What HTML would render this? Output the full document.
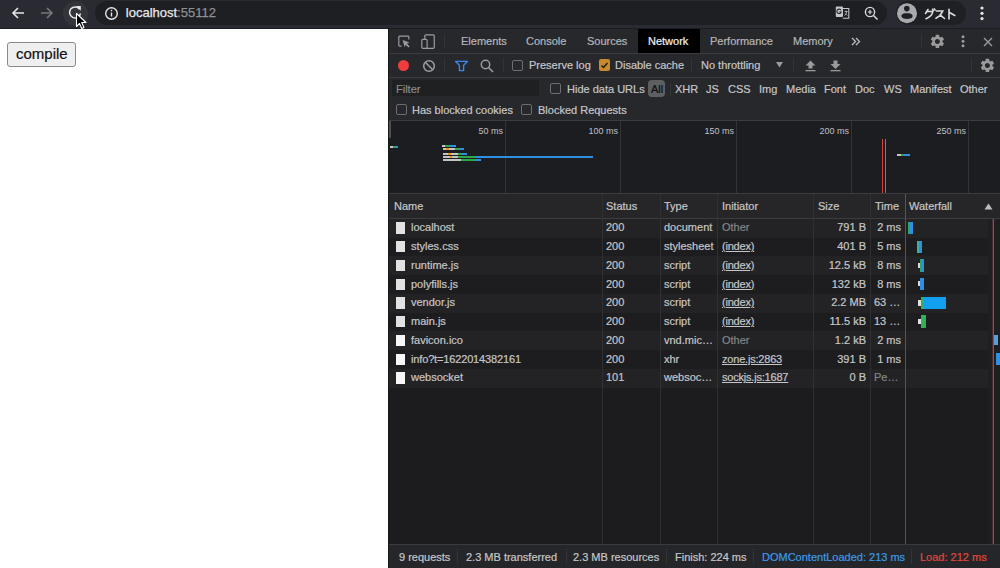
<!DOCTYPE html>
<html><head><meta charset="utf-8">
<style>
*{margin:0;padding:0;box-sizing:border-box}
html,body{width:1000px;height:568px;overflow:hidden}
body{position:relative;background:#fff;font-family:"Liberation Sans",sans-serif}
.a{position:absolute}
.t{position:absolute;font-size:11px;line-height:13px;white-space:nowrap;color:#c6c6c8;-webkit-text-stroke:0.2px currentColor}
.g{color:#858585}
.u{text-decoration:underline;letter-spacing:-0.2px}
.vs{position:absolute;width:1px;background:#3a3a3c}
.hs{position:absolute;height:1px;background:#3c3c3e}
.cb{position:absolute;width:11px;height:11px;border:1px solid #6e6e70;border-radius:2px}
</style></head>
<body>
<!-- chrome toolbar -->
<div class="a" style="left:0;top:0;width:1000px;height:28px;background:#2a2b32"></div>
<div class="a" style="left:0;top:28px;width:1000px;height:1px;background:#1c1d22"></div>
<!-- back -->
<svg class="a" style="left:10px;top:6px" width="16" height="14" viewBox="0 0 16 14"><path d="M14 7H3M8 2L3 7l5 5" stroke="#e6e6e8" stroke-width="1.6" fill="none"/></svg>
<svg class="a" style="left:39px;top:6px" width="16" height="14" viewBox="0 0 16 14"><path d="M2 7h11M8 2l5 5-5 5" stroke="#77787c" stroke-width="1.6" fill="none"/></svg>
<div class="a" style="left:63px;top:1px;width:25px;height:25px;border-radius:50%;background:#34353b"></div>
<svg class="a" style="left:66.8px;top:3.9px" width="16" height="16" viewBox="0 0 16 16"><path d="M12.6 5.2A5.5 5.5 0 1 0 13.5 9.5" stroke="#e6e6e8" stroke-width="1.5" fill="none"/><path d="M9 2h4.8v4.8z" fill="#e6e6e8"/></svg>
<svg class="a" style="left:75px;top:12px" width="12" height="18" viewBox="0 0 12 18"><path d="M1.5 1.5v13l3-3 2.2 5 2.2-1-2.2-5h4.3z" fill="#000" stroke="#fff" stroke-width="1.1" stroke-linejoin="round"/></svg>
<!-- address bar -->
<div class="a" style="left:95px;top:1px;width:792px;height:24px;border-radius:12px;background:#1e1f23"></div>
<svg class="a" style="left:104px;top:5.5px" width="15" height="15" viewBox="0 0 15 15"><circle cx="7.5" cy="7.5" r="5.8" stroke="#e6e6e8" stroke-width="1.4" fill="none"/><path d="M7.5 6.5v4" stroke="#e6e6e8" stroke-width="1.4"/><circle cx="7.5" cy="4.6" r="0.8" fill="#e6e6e8"/></svg>
<div class="a" style="left:125.8px;top:5.2px;font-size:13px;line-height:16px;color:#e8e8ea;white-space:nowrap;-webkit-text-stroke:0.25px currentColor">localhost<span style="color:#8e8f94">:55112</span></div>
<!-- translate icon -->
<svg class="a" style="left:835px;top:6px" width="15" height="14" viewBox="0 0 15 14"><path d="M7.5 2.5h6.3v9.7H7.8" fill="none" stroke="#c4c5c8" stroke-width="1.1"/><rect x="0.8" y="0.5" width="7.2" height="10.5" rx="1" fill="#c4c5c8"/><path d="M6 4.2A2.2 2.2 0 1 0 6.2 6H4.4" stroke="#2a2b32" stroke-width="1.1" fill="none"/><path d="M9.5 5.5h3M11 4.5v1M12 5.5q-1 3-2.5 4M10.3 7.5l2 2" stroke="#c4c5c8" stroke-width="0.8" fill="none"/></svg>
<svg class="a" style="left:864px;top:6px" width="15" height="15" viewBox="0 0 15 15"><circle cx="6" cy="6" r="4.6" stroke="#d6d7da" stroke-width="1.4" fill="none"/><path d="M9.5 9.5L13.5 13.5" stroke="#d6d7da" stroke-width="1.6"/><path d="M6 3.8v4.4M3.8 6h4.4" stroke="#d6d7da" stroke-width="1.2"/></svg>
<!-- profile pill -->
<div class="a" style="left:896px;top:1px;width:70px;height:23.5px;border-radius:12px;background:#1f2024"></div>
<svg class="a" style="left:896px;top:3px" width="22" height="22" viewBox="0 0 22 22"><circle cx="11" cy="10.3" r="10" fill="#a9aaae"/><circle cx="10.8" cy="5.6" r="2.8" fill="#1f2024"/><path d="M5.4 13.1C5.4 10.8 8 10.3 11 10.3S16.6 10.8 16.6 13.1 14 15.9 11 15.9 5.4 15.2 5.4 13.1z" fill="#1f2024"/></svg>
<svg class="a" style="left:923px;top:6.8px" width="34" height="14" viewBox="0 0 34 14"><g stroke="#dcdcde" stroke-width="1.6" fill="none" stroke-linecap="round"><path d="M5 2.5L2.5 6.5M3.5 4.5L10 4.3M9.8 4.6Q9 9.5 3 11.7M9.5 2.3l.8 1.4M11.3 1.8l.8 1.4"/><path d="M13.5 4H19.8Q17.5 9 13 11.3M17 7.8l4.5 3.7"/><path d="M26 2.3V12M26.5 5.5l5.3 3"/></g></svg>
<svg class="a" style="left:978px;top:6px" width="8" height="15" viewBox="0 0 8 15"><circle cx="4" cy="2" r="1.6" fill="#e6e6e8"/><circle cx="4" cy="7.3" r="1.6" fill="#e6e6e8"/><circle cx="4" cy="12.6" r="1.6" fill="#e6e6e8"/></svg>

<!-- page -->
<div class="a" style="left:7px;top:42px;width:69px;height:25px;border:1px solid #8a8a8a;border-radius:3px;background:#efefef"></div>
<div class="a" style="left:16px;top:45px;font-size:15px;line-height:18px;color:#111;white-space:nowrap;-webkit-text-stroke:0.2px currentColor">compile</div>

<!-- devtools -->
<div class="a" style="left:388px;top:29px;width:612px;height:539px;background:#1c1c1f"></div>
<div class="a" style="left:388px;top:29px;width:1px;height:539px;background:#18181a"></div>
<!-- tab bar + toolbar + filter -->
<div class="a" style="left:389px;top:29px;width:611px;height:92px;background:#27282b"></div>
<div class="hs" style="left:389px;top:53px;width:611px"></div>
<div class="hs" style="left:389px;top:77px;width:611px"></div>
<div class="hs" style="left:389px;top:120px;width:611px"></div>

<!-- tab bar icons -->
<svg class="a" style="left:397px;top:34px" width="14" height="14" viewBox="0 0 14 14"><path d="M4.5 12.1H2.6Q1.8 12.1 1.8 11.3V2.9Q1.8 2.1 2.6 2.1H11Q11.8 2.1 11.8 2.9V5.4" stroke="#9a9a9c" stroke-width="1.2" fill="none"/><path d="M5.6 6.1L12.4 8.6L9.9 9.6L12.6 12.3L11.4 13.4L8.7 10.8L7.6 13.2Z" fill="#9a9a9c"/></svg>
<svg class="a" style="left:420px;top:33px" width="16" height="16" viewBox="0 0 16 16"><rect x="4.85" y="1.8" width="9.4" height="13.5" rx="1" stroke="#9a9a9c" stroke-width="1.2" fill="none"/><rect x="1.8" y="6.3" width="5.3" height="9" rx="1" stroke="#9a9a9c" stroke-width="1.2" fill="#27282b"/></svg>
<div class="vs" style="left:444px;top:34px;height:14px;background:#343436"></div>
<div class="t" style="left:461px;top:35px;color:#b6b6b8">Elements</div>
<div class="t" style="left:526px;top:35px;color:#b6b6b8">Console</div>
<div class="t" style="left:587px;top:35px;color:#b6b6b8">Sources</div>
<div class="a" style="left:638px;top:29px;width:62px;height:24px;background:#000"></div>
<div class="t" style="left:648px;top:35px;color:#f0f0f0">Network</div>
<div class="t" style="left:710px;top:35px;color:#b6b6b8">Performance</div>
<div class="t" style="left:793px;top:35px;color:#b6b6b8">Memory</div>
<svg class="a" style="left:851px;top:37px" width="10" height="9" viewBox="0 0 10 9"><path d="M1 1l3.5 3.5L1 8M5 1l3.5 3.5L5 8" stroke="#bdbdbf" stroke-width="1.3" fill="none"/></svg>
<div class="vs" style="left:921px;top:34px;height:14px;background:#343436"></div>
<svg class="a" style="left:929.2px;top:32.6px" width="16.8" height="16.8" viewBox="0 0 24 24"><path fill="#9a9a9c" d="M19.14 12.94c.04-.3.06-.61.06-.94 0-.32-.02-.64-.07-.94l2.03-1.58c.18-.14.23-.41.12-.61l-1.92-3.32c-.12-.22-.37-.29-.59-.22l-2.39.96c-.5-.38-1.03-.7-1.62-.94l-.36-2.54c-.04-.24-.24-.41-.48-.41h-3.840c-.24 0-.43.17-.47.41l-.36 2.54c-.59.24-1.130.57-1.62.94l-2.39-.96c-.22-.08-.47 0-.59.22L2.74 8.87c-.12.21-.08.47.12.61l2.03 1.58c-.05.3-.09.63-.09.94s.02.64.07.94l-2.03 1.58c-.18.14-.23.41-.12.61l1.92 3.32c.12.22.37.29.59.22l2.39-.96c.5.38 1.03.7 1.62.94l.36 2.54c.05.24.24.41.48.41h3.84c.24 0 .44-.17.47-.41l.36-2.54c.59-.24 1.13-.56 1.62-.94l2.39.96c.22.08.47 0 .59-.22l1.92-3.32c.12-.22.07-.47-.12-.61l-2.010-1.58zM12 15.6c-1.98 0-3.6-1.62-3.6-3.6s1.62-3.6 3.6-3.6 3.6 1.62 3.6 3.6-1.62 3.6-3.6 3.6z"/></svg>
<svg class="a" style="left:960px;top:35px" width="6" height="13" viewBox="0 0 6 13"><circle cx="3" cy="1.8" r="1.5" fill="#9a9a9c"/><circle cx="3" cy="6.3" r="1.5" fill="#9a9a9c"/><circle cx="3" cy="10.8" r="1.5" fill="#9a9a9c"/></svg>
<svg class="a" style="left:982.5px;top:36.5px" width="10" height="10" viewBox="0 0 10 10"><path d="M1 1l8 8M9 1l-8 8" stroke="#9a9a9c" stroke-width="1.4"/></svg>

<!-- toolbar 2 -->
<div class="a" style="left:397.6px;top:59.9px;width:11.4px;height:11.4px;border-radius:50%;background:#f03c3c"></div>
<svg class="a" style="left:422px;top:58.7px" width="14" height="14" viewBox="0 0 14 14"><circle cx="7" cy="7" r="5.3" stroke="#9a9a9c" stroke-width="1.6" fill="none"/><path d="M3.3 3.3l7.4 7.4" stroke="#9a9a9c" stroke-width="1.6"/></svg>
<div class="vs" style="left:444px;top:58px;height:14px;background:#343436"></div>
<svg class="a" style="left:454px;top:59px" width="15" height="14" viewBox="0 0 15 14"><path d="M1.6 2.4H13.4L9.6 6.3V11.6H5.4V6.3Z" stroke="#3a86ee" stroke-width="1.4" fill="none" stroke-linejoin="round"/></svg>
<svg class="a" style="left:480px;top:59px" width="14" height="14" viewBox="0 0 14 14"><circle cx="5.5" cy="5.5" r="4.2" stroke="#9a9a9c" stroke-width="1.5" fill="none"/><path d="M8.5 8.5l4.5 4.5" stroke="#9a9a9c" stroke-width="1.6"/></svg>
<div class="vs" style="left:503px;top:58px;height:14px;background:#343436"></div>
<div class="cb" style="left:512px;top:60px"></div>
<div class="t" style="left:529px;top:59px">Preserve log</div>
<div class="a" style="left:598.5px;top:59.3px;width:11.5px;height:11.5px;border-radius:2px;background:#c88a28"></div>
<svg class="a" style="left:598.8px;top:59.5px" width="11" height="11" viewBox="0 0 11 11"><path d="M2.5 5.5l2 2 4-4.5" stroke="#1d1d1d" stroke-width="1.5" fill="none"/></svg>
<div class="t" style="left:615px;top:59px">Disable cache</div>
<div class="vs" style="left:691px;top:58px;height:14px;background:#343436"></div>
<div class="t" style="left:701px;top:59px">No throttling</div>
<svg class="a" style="left:776px;top:62px" width="7" height="6" viewBox="0 0 7 6"><path d="M0 0h7L3.5 5.5z" fill="#9a9a9c"/></svg>
<div class="vs" style="left:793px;top:58px;height:14px;background:#343436"></div>
<svg class="a" style="left:805px;top:60px" width="11" height="12" viewBox="0 0 11 12"><path d="M5.5 0.5L10.5 5.5H7.5V8.5H3.5V5.5H0.5z" fill="#9a9a9c"/><rect x="0.5" y="10" width="10" height="1.3" fill="#9a9a9c"/></svg>
<svg class="a" style="left:830px;top:60px" width="11" height="12" viewBox="0 0 11 12"><path d="M5.5 9L10.5 4H7.5V0.5H3.5V4H0.5z" fill="#9a9a9c"/><rect x="0.5" y="10" width="10" height="1.3" fill="#9a9a9c"/></svg>
<div class="vs" style="left:971px;top:58px;height:14px;background:#343436"></div>
<svg class="a" style="left:979.1px;top:56.6px" width="16.8" height="16.8" viewBox="0 0 24 24"><path fill="#9a9a9c" d="M19.14 12.94c.04-.3.06-.61.06-.94 0-.32-.02-.64-.07-.94l2.03-1.58c.18-.14.23-.41.12-.61l-1.92-3.32c-.12-.22-.37-.29-.59-.22l-2.39.96c-.5-.38-1.03-.7-1.62-.94l-.36-2.54c-.04-.24-.24-.41-.48-.41h-3.840c-.24 0-.43.17-.47.41l-.36 2.54c-.59.24-1.130.57-1.62.94l-2.39-.96c-.22-.08-.47 0-.59.22L2.74 8.87c-.12.21-.08.47.12.61l2.03 1.58c-.05.3-.09.63-.09.94s.02.64.07.94l-2.03 1.58c-.18.14-.23.41-.12.61l1.92 3.32c.12.22.37.29.59.22l2.39-.96c.5.38 1.03.7 1.62.94l.36 2.54c.05.24.24.41.48.41h3.84c.24 0 .44-.17.47-.41l.36-2.54c.59-.24 1.13-.56 1.62-.94l2.39.96c.22.08.47 0 .59-.22l1.92-3.32c.12-.22.07-.47-.12-.61l-2.010-1.58zM12 15.6c-1.98 0-3.6-1.62-3.6-3.6s1.62-3.6 3.6-3.6 3.6 1.62 3.6 3.6-1.62 3.6-3.6 3.6z"/></svg>

<!-- filter row -->
<div class="a" style="left:392px;top:80px;width:147px;height:16px;background:#1f2022"></div>
<div class="t" style="left:396px;top:83px;color:#8a8a8c">Filter</div>
<div class="cb" style="left:550px;top:83px"></div>
<div class="t" style="left:567px;top:83px">Hide data URLs</div>
<div class="a" style="left:648px;top:80px;width:17px;height:17px;border-radius:4px;background:#5e5f62"></div>
<div class="t" style="left:651px;top:83px;color:#0d0d0d">All</div>
<div class="vs" style="left:670px;top:83px;height:13px;background:#343436"></div>
<div class="t" style="left:675px;top:83px">XHR</div>
<div class="t" style="left:706px;top:83px">JS</div>
<div class="t" style="left:728px;top:83px">CSS</div>
<div class="t" style="left:759px;top:83px">Img</div>
<div class="t" style="left:786px;top:83px">Media</div>
<div class="t" style="left:824px;top:83px">Font</div>
<div class="t" style="left:855px;top:83px">Doc</div>
<div class="t" style="left:884px;top:83px">WS</div>
<div class="t" style="left:910px;top:83px">Manifest</div>
<div class="t" style="left:960px;top:83px">Other</div>
<div class="cb" style="left:396px;top:104px"></div>
<div class="t" style="left:412px;top:104px">Has blocked cookies</div>
<div class="cb" style="left:521px;top:104px"></div>
<div class="t" style="left:538px;top:104px">Blocked Requests</div>

<!-- overview -->
<div class="a" style="left:389px;top:121px;width:611px;height:72px;background:#1c1d21"></div>
<div class="a" style="left:388.8px;top:121px;width:2.3px;height:16.5px;background:#4e4e50"></div>
<div class="vs" style="left:505px;top:121px;height:72px;background:#333335"></div>
<div class="vs" style="left:620px;top:121px;height:72px;background:#333335"></div>
<div class="vs" style="left:736px;top:121px;height:72px;background:#333335"></div>
<div class="vs" style="left:851px;top:121px;height:72px;background:#333335"></div>
<div class="vs" style="left:968px;top:121px;height:72px;background:#333335"></div>
<div class="a" style="left:400px;top:126px;width:103px;font-size:9px;line-height:11px;text-align:right;color:#c0c0c2">50 ms</div>
<div class="a" style="left:515px;top:126px;width:103px;font-size:9px;line-height:11px;text-align:right;color:#c0c0c2">100 ms</div>
<div class="a" style="left:631px;top:126px;width:103px;font-size:9px;line-height:11px;text-align:right;color:#c0c0c2">150 ms</div>
<div class="a" style="left:746px;top:126px;width:103px;font-size:9px;line-height:11px;text-align:right;color:#c0c0c2">200 ms</div>
<div class="a" style="left:863px;top:126px;width:103px;font-size:9px;line-height:11px;text-align:right;color:#c0c0c2">250 ms</div>
<!-- overview bars -->
<div class="a" style="left:390px;top:146px;width:3px;height:1.6px;background:#c4c4c4"></div>
<div class="a" style="left:393px;top:146px;width:2px;height:1.6px;background:#2aa84a"></div>
<div class="a" style="left:395px;top:146px;width:3px;height:1.6px;background:#2f8fe0"></div>

<div class="a" style="left:442px;top:145px;width:3px;height:1.6px;background:#c4c4c4"></div>
<div class="a" style="left:445px;top:145px;width:5px;height:1.6px;background:#2aa84a"></div>
<div class="a" style="left:450px;top:145px;width:6px;height:1.6px;background:#2f8fe0"></div>
<div class="a" style="left:443px;top:148px;width:3px;height:1.6px;background:#c4c4c4"></div>
<div class="a" style="left:446px;top:148px;width:3px;height:1.6px;background:#e59420"></div>
<div class="a" style="left:449px;top:148px;width:6px;height:1.6px;background:#c4c4c4"></div>
<div class="a" style="left:455px;top:148px;width:4px;height:1.6px;background:#2aa84a"></div>
<div class="a" style="left:459px;top:148px;width:5px;height:1.6px;background:#2f8fe0"></div>
<div class="a" style="left:443px;top:153px;width:5px;height:1.6px;background:#c4c4c4"></div>
<div class="a" style="left:448px;top:153px;width:3px;height:1.6px;background:#e59420"></div>
<div class="a" style="left:451px;top:153px;width:7px;height:1.6px;background:#c4c4c4"></div>
<div class="a" style="left:458px;top:153px;width:4px;height:1.6px;background:#2aa84a"></div>
<div class="a" style="left:462px;top:153px;width:5px;height:1.6px;background:#2f8fe0"></div>
<div class="a" style="left:443px;top:156px;width:7px;height:1.6px;background:#c4c4c4"></div>
<div class="a" style="left:450px;top:156px;width:2px;height:1.6px;background:#e59420"></div>
<div class="a" style="left:452px;top:156px;width:6px;height:1.6px;background:#c4c4c4"></div>
<div class="a" style="left:458px;top:156px;width:17px;height:1.6px;background:#2aa84a"></div>
<div class="a" style="left:475px;top:156px;width:118px;height:1.6px;background:#2f8fe0"></div>
<div class="a" style="left:443px;top:159px;width:18px;height:1.6px;background:#c4c4c4"></div>
<div class="a" style="left:461px;top:159px;width:15px;height:1.6px;background:#2aa84a"></div>
<div class="a" style="left:476px;top:159px;width:5px;height:1.6px;background:#2f8fe0"></div>

<div class="a" style="left:882px;top:139px;width:1px;height:54px;background:#d8443a"></div>
<div class="a" style="left:885px;top:139px;width:1px;height:54px;background:#3b8de0"></div>
<div class="a" style="left:897px;top:154px;width:4px;height:1.6px;background:#c4c4c4"></div>
<div class="a" style="left:901px;top:154px;width:3px;height:1.6px;background:#2aa84a"></div>
<div class="a" style="left:904px;top:154px;width:6px;height:1.6px;background:#2f8fe0"></div>
<div class="hs" style="left:389px;top:193px;width:611px"></div>

<!-- table header -->
<div class="a" style="left:389px;top:194px;width:611px;height:24px;background:#262629"></div>
<div class="hs" style="left:389px;top:218px;width:611px"></div>
<div class="t" style="left:394px;top:200px">Name</div>
<div class="t" style="left:606px;top:200px">Status</div>
<div class="t" style="left:664px;top:200px">Type</div>
<div class="t" style="left:722px;top:200px">Initiator</div>
<div class="t" style="left:818px;top:200px">Size</div>
<div class="t" style="left:875px;top:200px">Time</div>
<div class="t" style="left:909px;top:200px">Waterfall</div>
<svg class="a" style="left:984px;top:202.5px" width="9" height="7" viewBox="0 0 9 7"><path d="M4.5 0.5L8.5 6.5H0.5z" fill="#bdbdbf"/></svg>

<!-- rows -->
<div class="a" style="left:389px;top:218.75px;width:599px;height:18.75px;background:#232224"></div>
<div class="a" style="left:395.6px;top:222.45px;width:9.5px;height:11.3px;background:#e2e2e2"></div>
<div class="t" style="left:411px;top:221.35px">localhost</div>
<div class="t" style="left:606px;top:221.35px">200</div>
<div class="t" style="left:664px;top:221.35px">document</div>
<div class="t g" style="left:722px;top:221.35px">Other</div>
<div class="t" style="left:813px;top:221.35px;width:53px;text-align:right">791 B</div>
<div class="t" style="left:860px;top:221.35px;width:41px;text-align:right">2 ms</div>
<div class="a" style="left:389px;top:237.5px;width:599px;height:18.75px;background:#1d1d20"></div>
<div class="a" style="left:395.6px;top:241.2px;width:9.5px;height:11.3px;background:#e2e2e2"></div>
<div class="t" style="left:411px;top:240.1px">styles.css</div>
<div class="t" style="left:606px;top:240.1px">200</div>
<div class="t" style="left:664px;top:240.1px">stylesheet</div>
<div class="t u" style="left:722px;top:240.1px">(index)</div>
<div class="t" style="left:813px;top:240.1px;width:53px;text-align:right">401 B</div>
<div class="t" style="left:860px;top:240.1px;width:41px;text-align:right">5 ms</div>
<div class="a" style="left:389px;top:256.25px;width:599px;height:18.75px;background:#232224"></div>
<div class="a" style="left:395.6px;top:259.95px;width:9.5px;height:11.3px;background:#e2e2e2"></div>
<div class="t" style="left:411px;top:258.85px">runtime.js</div>
<div class="t" style="left:606px;top:258.85px">200</div>
<div class="t" style="left:664px;top:258.85px">script</div>
<div class="t u" style="left:722px;top:258.85px">(index)</div>
<div class="t" style="left:813px;top:258.85px;width:53px;text-align:right">12.5 kB</div>
<div class="t" style="left:860px;top:258.85px;width:41px;text-align:right">8 ms</div>
<div class="a" style="left:389px;top:275.0px;width:599px;height:18.75px;background:#1d1d20"></div>
<div class="a" style="left:395.6px;top:278.7px;width:9.5px;height:11.3px;background:#e2e2e2"></div>
<div class="t" style="left:411px;top:277.6px">polyfills.js</div>
<div class="t" style="left:606px;top:277.6px">200</div>
<div class="t" style="left:664px;top:277.6px">script</div>
<div class="t u" style="left:722px;top:277.6px">(index)</div>
<div class="t" style="left:813px;top:277.6px;width:53px;text-align:right">132 kB</div>
<div class="t" style="left:860px;top:277.6px;width:41px;text-align:right">8 ms</div>
<div class="a" style="left:389px;top:293.75px;width:599px;height:18.75px;background:#232224"></div>
<div class="a" style="left:395.6px;top:297.45px;width:9.5px;height:11.3px;background:#e2e2e2"></div>
<div class="t" style="left:411px;top:296.35px">vendor.js</div>
<div class="t" style="left:606px;top:296.35px">200</div>
<div class="t" style="left:664px;top:296.35px">script</div>
<div class="t u" style="left:722px;top:296.35px">(index)</div>
<div class="t" style="left:813px;top:296.35px;width:53px;text-align:right">2.2 MB</div>
<div class="t" style="left:874px;top:296.35px">63 …</div>
<div class="a" style="left:389px;top:312.5px;width:599px;height:18.75px;background:#1d1d20"></div>
<div class="a" style="left:395.6px;top:316.2px;width:9.5px;height:11.3px;background:#e2e2e2"></div>
<div class="t" style="left:411px;top:315.1px">main.js</div>
<div class="t" style="left:606px;top:315.1px">200</div>
<div class="t" style="left:664px;top:315.1px">script</div>
<div class="t u" style="left:722px;top:315.1px">(index)</div>
<div class="t" style="left:813px;top:315.1px;width:53px;text-align:right">11.5 kB</div>
<div class="t" style="left:874px;top:315.1px">13 …</div>
<div class="a" style="left:389px;top:331.25px;width:599px;height:18.75px;background:#232224"></div>
<div class="a" style="left:395.6px;top:334.95px;width:9.5px;height:11.3px;background:#f6f6f6"></div>
<div class="t" style="left:411px;top:333.85px">favicon.ico</div>
<div class="t" style="left:606px;top:333.85px">200</div>
<div class="t" style="left:664px;top:333.85px">vnd.mic…</div>
<div class="t g" style="left:722px;top:333.85px">Other</div>
<div class="t" style="left:813px;top:333.85px;width:53px;text-align:right">1.2 kB</div>
<div class="t" style="left:860px;top:333.85px;width:41px;text-align:right">2 ms</div>
<div class="a" style="left:389px;top:350.0px;width:599px;height:18.75px;background:#1d1d20"></div>
<div class="a" style="left:395.6px;top:353.7px;width:9.5px;height:11.3px;background:#f6f6f6"></div>
<div class="t" style="left:411px;top:352.6px;letter-spacing:-0.15px">info?t=1622014382161</div>
<div class="t" style="left:606px;top:352.6px">200</div>
<div class="t" style="left:664px;top:352.6px">xhr</div>
<div class="t u" style="left:722px;top:352.6px">zone.js:2863</div>
<div class="t" style="left:813px;top:352.6px;width:53px;text-align:right">391 B</div>
<div class="t" style="left:860px;top:352.6px;width:41px;text-align:right">1 ms</div>
<div class="a" style="left:389px;top:368.75px;width:599px;height:18.75px;background:#232224"></div>
<div class="a" style="left:395.6px;top:372.45px;width:9.5px;height:11.3px;background:#f6f6f6"></div>
<div class="t" style="left:411px;top:371.35px">websocket</div>
<div class="t" style="left:606px;top:371.35px">101</div>
<div class="t" style="left:664px;top:371.35px">websoc…</div>
<div class="t u" style="left:722px;top:371.35px">sockjs.js:1687</div>
<div class="t" style="left:813px;top:371.35px;width:53px;text-align:right">0 B</div>
<div class="t g" style="left:874px;top:371.35px">Pe…</div>
<!-- wf -->
<div class="a" style="left:988px;top:219px;width:12px;height:325px;background:#1f1f22"></div>
<div class="a" style="left:992px;top:219px;width:1px;height:325px;background:#4a2c30"></div>
<div class="a" style="left:993px;top:219px;width:1px;height:325px;background:#5b57b8"></div>
<div class="a" style="left:908px;top:222px;width:2px;height:12px;background:#2aa860"></div>
<div class="a" style="left:910px;top:222px;width:2.5px;height:12px;background:#2f8fe0"></div>
<div class="a" style="left:917px;top:241px;width:2px;height:12px;background:#3fb0a0"></div>
<div class="a" style="left:919px;top:241px;width:3px;height:12px;background:#2f8fe0"></div>
<div class="a" style="left:917.5px;top:263px;width:2.5px;height:5px;background:#d8d8d8"></div>
<div class="a" style="left:920px;top:259px;width:1.5px;height:13px;background:#2aa860"></div>
<div class="a" style="left:921.5px;top:259px;width:2.5px;height:13px;background:#2f8fe0"></div>
<div class="a" style="left:917.5px;top:281px;width:2.5px;height:5px;background:#d8d8d8"></div>
<div class="a" style="left:920px;top:278px;width:4px;height:12px;background:#2f8fe0"></div>
<div class="a" style="left:917.5px;top:300px;width:3px;height:6px;background:#e0e0e0"></div>
<div class="a" style="left:920.5px;top:297px;width:3px;height:12px;background:#2db45a"></div>
<div class="a" style="left:923.5px;top:297px;width:22px;height:12px;background:#139ff0"></div>
<div class="a" style="left:917.5px;top:319px;width:3px;height:5px;background:#e0e0e0"></div>
<div class="a" style="left:920.5px;top:315px;width:4px;height:13px;background:#2db45a"></div>
<div class="a" style="left:924.5px;top:315px;width:1.5px;height:13px;background:#139ff0"></div>
<div class="a" style="left:994px;top:335px;width:4px;height:10px;background:#5aa0d8"></div>
<div class="a" style="left:996px;top:353px;width:4px;height:12px;background:#2f8fe0"></div>

<!-- column dividers -->
<div class="vs" style="left:602px;top:194px;height:351px;background:#303032"></div>
<div class="vs" style="left:660px;top:194px;height:351px;background:#303032"></div>
<div class="vs" style="left:717px;top:194px;height:351px;background:#303032"></div>
<div class="vs" style="left:813px;top:194px;height:351px;background:#303032"></div>
<div class="vs" style="left:870px;top:194px;height:351px;background:#303032"></div>
<div class="vs" style="left:905px;top:194px;height:351px;background:#555557"></div>

<!-- status bar -->
<div class="hs" style="left:389px;top:544px;width:611px"></div>
<div class="a" style="left:389px;top:545px;width:611px;height:23px;background:#252629"></div>
<div class="t" style="left:399px;top:551px">9 requests</div>
<div class="vs" style="left:457px;top:549px;height:15px;background:#343436"></div>
<div class="t" style="left:466px;top:551px">2.3 MB transferred</div>
<div class="vs" style="left:566px;top:549px;height:15px;background:#343436"></div>
<div class="t" style="left:573px;top:551px">2.3 MB resources</div>
<div class="vs" style="left:666px;top:549px;height:15px;background:#343436"></div>
<div class="t" style="left:675px;top:551px">Finish: 224 ms</div>
<div class="vs" style="left:753px;top:549px;height:15px;background:#343436"></div>
<div class="t" style="left:762px;top:551px;color:#3d9be8">DOMContentLoaded: 213 ms</div>
<div class="vs" style="left:911px;top:549px;height:15px;background:#343436"></div>
<div class="t" style="left:920px;top:551px;color:#e2473c">Load: 212 ms</div>
</body></html>
